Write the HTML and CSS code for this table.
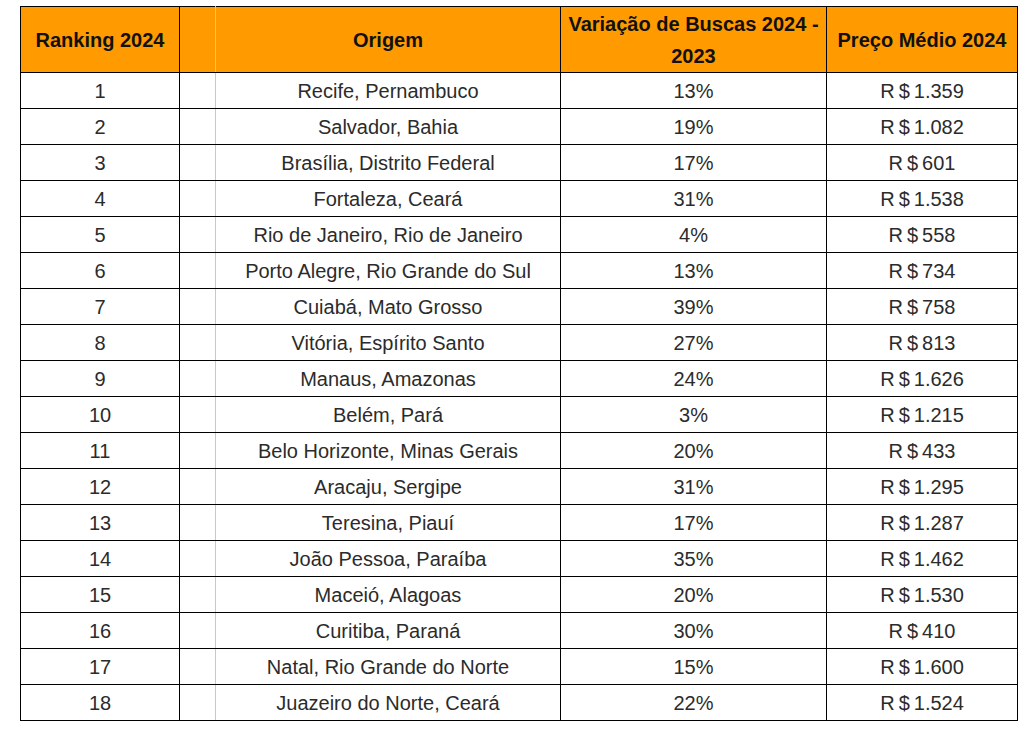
FILE: index.html
```html
<!DOCTYPE html>
<html lang="pt-BR">
<head>
<meta charset="utf-8">
<title>Ranking 2024</title>
<link rel="stylesheet" href="styles.css">
</head>
<body>
<table class="rank">
  <colgroup>
    <col class="c-rank"><col class="c-gap"><col class="c-orig"><col class="c-var"><col class="c-price">
  </colgroup>
  <thead>
    <tr>
      <th>Ranking 2024</th><th class="gap"></th><th>Origem</th><th>Variação de Buscas 2024 - 2023</th><th>Preço Médio 2024</th>
    </tr>
  </thead>
  <tbody>
    <tr><td>1</td><td class="gap"></td><td>Recife, Pernambuco</td><td>13%</td><td>R&#8201;$&#8201;1.359</td></tr>
    <tr><td>2</td><td class="gap"></td><td>Salvador, Bahia</td><td>19%</td><td>R&#8201;$&#8201;1.082</td></tr>
    <tr><td>3</td><td class="gap"></td><td>Brasília, Distrito Federal</td><td>17%</td><td>R&#8201;$&#8201;601</td></tr>
    <tr><td>4</td><td class="gap"></td><td>Fortaleza, Ceará</td><td>31%</td><td>R&#8201;$&#8201;1.538</td></tr>
    <tr><td>5</td><td class="gap"></td><td>Rio de Janeiro, Rio de Janeiro</td><td>4%</td><td>R&#8201;$&#8201;558</td></tr>
    <tr><td>6</td><td class="gap"></td><td>Porto Alegre, Rio Grande do Sul</td><td>13%</td><td>R&#8201;$&#8201;734</td></tr>
    <tr><td>7</td><td class="gap"></td><td>Cuiabá, Mato Grosso</td><td>39%</td><td>R&#8201;$&#8201;758</td></tr>
    <tr><td>8</td><td class="gap"></td><td>Vitória, Espírito Santo</td><td>27%</td><td>R&#8201;$&#8201;813</td></tr>
    <tr><td>9</td><td class="gap"></td><td>Manaus, Amazonas</td><td>24%</td><td>R&#8201;$&#8201;1.626</td></tr>
    <tr><td>10</td><td class="gap"></td><td>Belém, Pará</td><td>3%</td><td>R&#8201;$&#8201;1.215</td></tr>
    <tr><td>11</td><td class="gap"></td><td>Belo Horizonte, Minas Gerais</td><td>20%</td><td>R&#8201;$&#8201;433</td></tr>
    <tr><td>12</td><td class="gap"></td><td>Aracaju, Sergipe</td><td>31%</td><td>R&#8201;$&#8201;1.295</td></tr>
    <tr><td>13</td><td class="gap"></td><td>Teresina, Piauí</td><td>17%</td><td>R&#8201;$&#8201;1.287</td></tr>
    <tr><td>14</td><td class="gap"></td><td>João Pessoa, Paraíba</td><td>35%</td><td>R&#8201;$&#8201;1.462</td></tr>
    <tr><td>15</td><td class="gap"></td><td>Maceió, Alagoas</td><td>20%</td><td>R&#8201;$&#8201;1.530</td></tr>
    <tr><td>16</td><td class="gap"></td><td>Curitiba, Paraná</td><td>30%</td><td>R&#8201;$&#8201;410</td></tr>
    <tr><td>17</td><td class="gap"></td><td>Natal, Rio Grande do Norte</td><td>15%</td><td>R&#8201;$&#8201;1.600</td></tr>
    <tr><td>18</td><td class="gap"></td><td>Juazeiro do Norte, Ceará</td><td>22%</td><td>R&#8201;$&#8201;1.524</td></tr>
  </tbody>
</table>
</body>
</html>
```

FILE: styles.css
```css
html, body {
  margin: 0;
  padding: 0;
  background: #fff;
}
body {
  padding: 6px 0 0 20px;
  font-family: "Liberation Sans", Arial, sans-serif;
}
.rank {
  border-collapse: collapse;
  table-layout: fixed;
  width: 997px;
  font-size: 20px;
  color: #2b2b2b;
}
.c-rank { width: 159px; }
.c-gap { width: 36px; }
.c-orig { width: 345px; }
.c-var { width: 266px; }
.c-price { width: 191px; }
.rank th, .rank td {
  border: 1px solid #000;
  padding: 0 4px;
  text-align: center;
  vertical-align: middle;
}
.rank th {
  background: #ff9a00;
  color: #111;
  font-weight: bold;
  height: 65px;
  line-height: 32px;
}
.rank td {
  height: 35px;
  line-height: 22px;
}
.rank .gap {
  border-right-color: #c8c8c8;
}
```
